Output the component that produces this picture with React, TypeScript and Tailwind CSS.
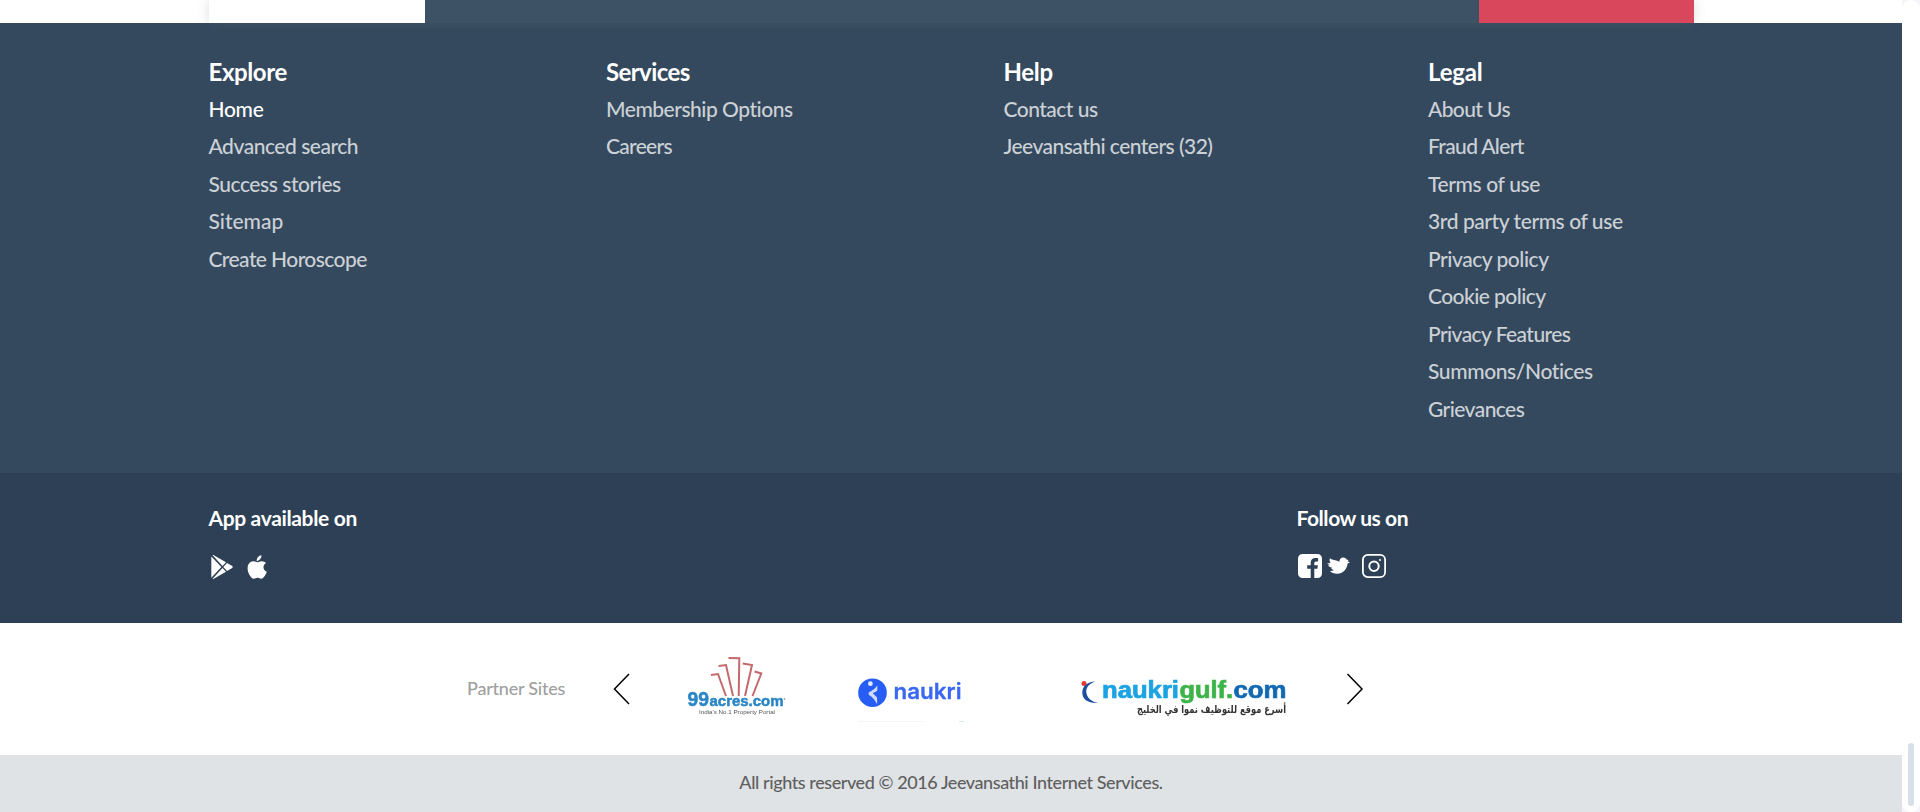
import React from 'react';

type Item = { label: string; className: string };

const columns: { title: Item; width: string; links: Item[] }[] = [
  {
    title: { label: 'Explore', className: 'tracking-[-0.4px]' },
    width: 'w-[397.5px]',
    links: [
      { label: 'Home', className: 'text-white tracking-[-0.3px]' },
      { label: 'Advanced search', className: 'text-white/75 tracking-[-0.47px]' },
      { label: 'Success stories', className: 'text-white/75 tracking-[-0.45px]' },
      { label: 'Sitemap', className: 'text-white/75 tracking-[0px]' },
      { label: 'Create Horoscope', className: 'text-white/75 tracking-[-0.58px]' },
    ],
  },
  {
    title: { label: 'Services', className: 'tracking-[-0.6px]' },
    width: 'w-[397.5px]',
    links: [
      { label: 'Membership Options', className: 'text-white/75 tracking-[-0.48px]' },
      { label: 'Careers', className: 'text-white/75 tracking-[-0.7px]' },
    ],
  },
  {
    title: { label: 'Help', className: 'tracking-[-0.3px]' },
    width: 'w-[424.5px]',
    links: [
      { label: 'Contact us', className: 'text-white/75 tracking-[-0.52px]' },
      { label: 'Jeevansathi centers (32)', className: 'text-white/75 tracking-[-0.53px]' },
    ],
  },
  {
    title: { label: 'Legal', className: 'tracking-[-0.2px]' },
    width: 'w-[260px]',
    links: [
      { label: 'About Us', className: 'text-white/75 tracking-[-0.6px]' },
      { label: 'Fraud Alert', className: 'text-white/75 tracking-[-0.65px]' },
      { label: 'Terms of use', className: 'text-white/75 tracking-[-0.37px]' },
      { label: '3rd party terms of use', className: 'text-white/75 tracking-[-0.43px]' },
      { label: 'Privacy policy', className: 'text-white/75 tracking-[-0.46px]' },
      { label: 'Cookie policy', className: 'text-white/75 tracking-[-0.56px]' },
      { label: 'Privacy Features', className: 'text-white/75 tracking-[-0.57px]' },
      { label: 'Summons/Notices', className: 'text-white/75 tracking-[-0.38px]' },
      { label: 'Grievances', className: 'text-white/75 tracking-[-0.56px]' },
    ],
  },
];

function PlayIcon() {
  return (
    <svg className="h-6 w-[22px]" viewBox="0 0 22 24" fill="#fff">
      <path d="M.3 1.4 10.4 12 .3 22.7z" />
      <path d="M1.6.3c.5-.3 1.100-.2 1.600.1L15 7.200 11.500 11z" />
      <path d="m1.600 23.700 9.900-10.600L15 16.800 3.200 23.600c-.5.3-1.100.4-1.600.1z" />
      <path d="m16 7.900 4.800 2.800c1.200.7 1.200 1.900 0 2.600L16 16.100 12.300 12z" />
    </svg>
  );
}

function AppleIcon() {
  return (
    <svg className="h-6 w-5" viewBox="0 0 20 24" fill="#fff">
      <path d="M14.400.2c.2 1.500-.4 2.900-1.200 3.900-.9 1.100-2.100 1.900-3.500 1.800-.2-1.400.4-2.800 1.200-3.700C11.800 1.100 13.200.3 14.400.2z" />
      <path d="M19 8c-1.500.9-2.500 2.300-2.500 4.200 0 2.200 1.300 3.800 3.300 4.600-.5 1.500-1.200 2.900-2.100 4.200-1 1.400-2 2.700-3.500 2.700-1.500 0-1.900-.9-3.700-.9-1.700 0-2.300.9-3.700.9-1.500.1-2.600-1.400-3.600-2.800C1.100 18-.5 12.900 1.500 9.300c1-1.800 2.900-3 4.900-3 1.500 0 3 1 3.900 1s2.700-1.300 4.600-1.100c1.500.1 3.100.6 4.100 1.800z" />
    </svg>
  );
}

function FacebookIcon() {
  return (
    <svg className="h-6 w-6" viewBox="0 0 24 24" fill="#fff">
      <path d="M4.500 0h15A4.500 4.500 0 0 1 24 4.500v15a4.500 4.500 0 0 1-4.500 4.500h-3.200v-9.300h3.100l.5-3.400h-3.600V9.400c0-1.200.5-1.900 1.900-1.900h1.900V4.300c-.5-.1-1.400-.2-2.600-.2-3 0-4.800 1.700-4.800 4.900v2.300H9.200v3.400h3.500V24H4.500A4.500 4.500 0 0 1 0 19.500v-15A4.500 4.500 0 0 1 4.500 0z" />
    </svg>
  );
}

function TwitterIcon() {
  return (
    <svg className="h-[18px] w-[23px]" viewBox="0 0 23 18" fill="#fff">
      <path d="M2.900 1.300c2 1.400 4.100 2 7.200 2.500 1.100.2 1.700.5 2.200 1.200C12.200 2.500 14 .6 16.200.6c1.500 0 2.600.7 3.300 1.900l2.100.5-.9 1.400 2.300.9-2.400 1.200c-.5 5.800-4.700 10.100-10.300 10.300-2.900.1-5.600-.9-7.400-2.700 1.700.1 3-.3 4-1.100-1.400-.2-2.300-.9-2.700-1.900l1.400-.3C3.600 10.600 2 9.900.9 8.300L3 8.200 0 6.500 3.500 6C2.600 4.600 2.300 2.900 2.900 1.300z" />
    </svg>
  );
}

function InstagramIcon() {
  return (
    <svg className="h-6 w-6" viewBox="0 0 24 24" fill="none" stroke="#fff" strokeWidth="1.800">
      <rect x=".9" y=".9" width="22.200" height="22.200" rx="4.800" />
      <circle cx="12" cy="12.300" r="4.700" strokeWidth="2" />
      <circle cx="18" cy="6" r="1" fill="#fff" stroke="none" />
    </svg>
  );
}

function AcresLogo() {
  return (
    <svg className="h-[70px] w-[110px] blur-[0.6px]" viewBox="0 0 110 70">
      <g fill="none" stroke="#c4696c" strokeWidth="2">
        <path d="m31 25 7-1 8 22M38.500 16l7.500-1 7 31M48.500 8l10.800.3L58.700 46M62.700 13.500 72 15l-7 31M74.500 21.500l6.800 2L72.500 46" />
      </g>
      <text x="7.500" y="56" fill="#2a86c6" stroke="#2a86c6" strokeWidth=".5" fontSize="20" className="font-['Liberation_Sans'] font-bold" textLength="21.500" lengthAdjust="spacingAndGlyphs">99</text>
      <text x="29.500" y="56" fill="#2a86c6" stroke="#2a86c6" strokeWidth=".5" fontSize="15.500" className="font-['Liberation_Sans'] font-bold" textLength="74" lengthAdjust="spacingAndGlyphs">acres.com</text>
      <text x="19" y="63.500" fill="#555" fontSize="6.200" className="font-['Liberation_Sans']" textLength="76" lengthAdjust="spacingAndGlyphs">India's No.1 Property Portal</text>
      <circle cx="104.500" cy="49" r=".8" fill="#777" />
    </svg>
  );
}

function NaukriLogo() {
  return (
    <svg className="h-[50px] w-[110px] blur-[0.5px]" viewBox="0 0 110 50">
      <circle cx="14.500" cy="19.700" r="14.300" fill="#275df5" />
      <circle cx="12.400" cy="10.700" r="2.400" fill="#e4ecff" />
      <path d="M19.300 12.200v5.500l-4.500 2.600 4.300 4.200v6.700c-1.600-3.300-4.300-6.700-7.700-8.900-1.300-.9-1.200-2.400.1-3.300 3-1.700 5.800-3.400 7.800-6.800z" fill="#cfdcff" />
      <text x="35.500" y="26" fill="#3a68f2" stroke="#3a68f2" strokeWidth=".3" fontSize="22" className="font-['Inter'] font-semibold" textLength="68" lengthAdjust="spacingAndGlyphs">naukri</text>
      <path d="M0 48.500h66" stroke="#f6f6f6" />
      <path d="M101 48.500h5" stroke="#dcebe9" />
    </svg>
  );
}

function NaukriGulfLogo() {
  return (
    <svg className="h-[50px] w-[220px] blur-[0.5px]" viewBox="0 0 220 50">
      <circle cx="4" cy="10.500" r="2.500" fill="#e8372c" />
      <path d="M15.500 8.500C8 11 5.500 15.500 6.500 20.500 7.700 25.500 12 28.800 18.500 30 7.500 30.500 2.500 26 2.300 20 2.200 13 7 8.800 15.500 8.500z" fill="#1d4f9f" />
      <g fontSize="23.500" strokeWidth=".7" className="font-['Liberation_Sans'] font-bold">
        <text x="22" y="25" fill="#1ba3e3" stroke="#1ba3e3" textLength="77" lengthAdjust="spacingAndGlyphs">naukri</text>
        <text x="99.500" y="25" fill="#3db449" stroke="#3db449" textLength="53.500" lengthAdjust="spacingAndGlyphs">gulf.</text>
        <text x="153.500" y="25" fill="#1269b3" stroke="#1269b3" textLength="53" lengthAdjust="spacingAndGlyphs">com</text>
      </g>
      <text x="57" y="40" fill="#333" fontSize="11" className="font-['DejaVu_Sans'] font-bold" textLength="149" lengthAdjust="spacingAndGlyphs">أسرع موقع للتوظيف نموا في الخليج</text>
    </svg>
  );
}

function Arrow({ d, className }: { d: string; className: string }) {
  return (
    <svg className={`h-8 w-[18px] ${className}`} viewBox="0 0 18 32" fill="none" stroke="#000" strokeWidth="1.500">
      <path d={d} />
    </svg>
  );
}

export default function App() {
  return (
    <div className="flex h-[812px] w-full overflow-hidden bg-white font-['Lato',sans-serif]">
      <div className="flex w-[1902px] shrink-0 flex-col">
        <div className="relative h-[23px] pl-[209px]">
          <div className="flex h-[23px] w-[1485px] shadow-[0_0_12px_rgba(120,120,120,0.25)]">
            <div className="w-[216px] bg-white" />
            <div className="w-[1054px] bg-[#3e5266]" />
            <div className="w-[215px] bg-[#d9475c]" />
          </div>
        </div>

        <nav className="flex h-[450px] bg-[#34495e] pt-7 pl-[208.5px]">
          {columns.map((c) => (
            <section key={c.title.label} className={c.width}>
              <h2 className={`h-[38.8px] text-[24px] leading-[42px] font-bold whitespace-nowrap text-white ${c.title.className}`}>
                {c.title.label}
              </h2>
              <ul>
                {c.links.map((l) => (
                  <li key={l.label} className={`h-[37.5px] text-[21px] leading-[37.5px] font-medium whitespace-nowrap ${l.className}`}>
                    {l.label}
                  </li>
                ))}
              </ul>
            </section>
          ))}
        </nav>

        <div className="flex h-[150px] bg-[#2d4055] pt-[30px] pl-[208.5px] text-[21px] font-bold text-white">
          <div className="w-[1088px]">
            <h3 className="leading-[30px] tracking-[-0.35px]">App available on</h3>
            <div className="mt-[21.5px] ml-[2.5px] flex items-center gap-[14px]">
              <PlayIcon />
              <AppleIcon />
            </div>
          </div>
          <div>
            <h3 className="leading-[30px] tracking-[-0.45px]">Follow us on</h3>
            <div className="mt-[21px] ml-[1.5px] flex items-center">
              <FacebookIcon />
              <div className="ml-[5px]"><TwitterIcon /></div>
              <div className="ml-3"><InstagramIcon /></div>
            </div>
          </div>
        </div>

        <div className="flex h-[132px] items-start bg-white pl-[467px]">
          <span className="mt-[50px] w-[146px] text-[18px] leading-[31px] font-medium tracking-[-0.22px] text-[#a0a0a0]">Partner Sites</span>
          <Arrow className="mt-[50px]" d="M16 1 1.500 16 16 31" />
          <div className="mt-[27px] ml-[49px]"><AcresLogo /></div>
          <div className="mt-[50px] ml-[68px]"><NaukriLogo /></div>
          <div className="mt-[50px] ml-[112px]"><NaukriGulfLogo /></div>
          <Arrow className="mt-[50px] ml-[46px]" d="m1.500 1 14.500 15-14.500 15" />
        </div>

        <div className="h-[57px] bg-[#dfe3e6] text-center text-[18px] leading-[55px] font-medium tracking-[-0.42px] text-[#606060]">
          All rights reserved © 2016 Jeevansathi Internet Services.
        </div>
      </div>

      <div className="flex w-[18px] shrink-0 bg-[#f4f4fa]">
        <div className="flex w-[18px] items-end justify-center rounded-[9px] bg-white pb-1.5">
          <div className="h-[63px] w-1.5 rounded-full bg-[#d5e0e9]" />
        </div>
      </div>
    </div>
  );
}
